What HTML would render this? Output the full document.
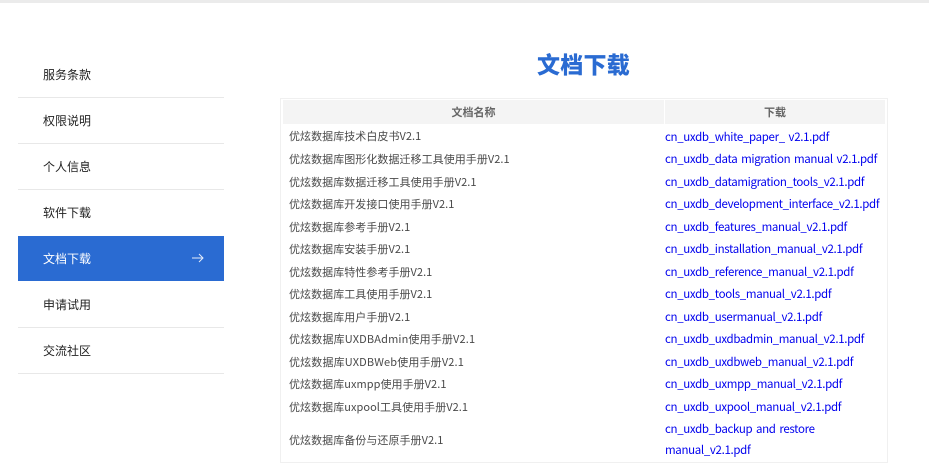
<!DOCTYPE html>
<html lang="zh-CN"><head><meta charset="utf-8"><style>
html,body{margin:0;padding:0;width:929px;height:464px;overflow:hidden;background:#fff}
body{position:relative;font-family:"Liberation Sans","Noto Sans CJK SC",sans-serif}
div{position:absolute}
.t{white-space:nowrap;line-height:20px;height:20px}
.m{left:43px;font-size:12px;color:#222;font-family:"Noto Sans CJK SC",sans-serif}
.h{left:18px;width:206px;height:1px;background:#e8e8e8}
.l{left:289px;font-size:11px;color:#4a4a4a;font-family:"Noto Sans CJK SC",sans-serif;letter-spacing:.05px}
.l.w{letter-spacing:.15px}
.r{left:665px;font-size:11.5px;color:#00e;font-family:"Noto Sans CJK SC",sans-serif;letter-spacing:-.34px;word-spacing:1.5px}
.th{font-size:11px;font-weight:700;color:#666;font-family:"Noto Sans CJK SC",sans-serif;text-align:center}
</style></head><body>
<div style="left:0;top:0;width:929px;height:3px;background:#ebebeb"></div>

<div class="t m" style="top:65px">服务条款</div>
<div class="h" style="top:97px"></div>
<div class="t m" style="top:111px">权限说明</div>
<div class="h" style="top:143px"></div>
<div class="t m" style="top:157px">个人信息</div>
<div class="h" style="top:189px"></div>
<div class="t m" style="top:203px">软件下载</div>
<div style="left:18px;top:236px;width:206px;height:45px;background:#2a6bd2"></div>
<div class="t m" style="top:249px;color:#fff">文档下载</div>
<svg style="position:absolute;left:192px;top:252px" width="12" height="12" viewBox="0 0 12 12"><path d="M0 6H11M7 2L11 6L7 10" fill="none" stroke="#e4ecfa" stroke-width="1"/></svg>
<div class="t m" style="top:295px">申请试用</div>
<div class="h" style="top:327px"></div>
<div class="t m" style="top:341px">交流社区</div>
<div class="h" style="top:373px"></div>

<div class="t" style="left:537px;top:48px;height:30px;line-height:30px;font-size:23px;letter-spacing:.25px;font-weight:900;color:#2a6bd2;font-family:'Noto Sans CJK SC',sans-serif">文档下载</div>

<div style="left:280px;top:98px;width:606px;height:363px;border:1px solid #f0f0f0"></div>
<div style="left:283px;top:100px;width:381px;height:24px;background:#f4f4f4"></div>
<div style="left:665px;top:100px;width:220px;height:24px;background:#f4f4f4"></div>
<div class="t th" style="left:283px;top:102px;width:381px">文档名称</div>
<div class="t th" style="left:665px;top:102px;width:220px">下载</div>

<div class="t l" style="top:126px">优炫数据库技术白皮书V2.1</div>
<div class="t l" style="top:149px">优炫数据库图形化数据迁移工具使用手册V2.1</div>
<div class="t l" style="top:172px">优炫数据库数据迁移工具使用手册V2.1</div>
<div class="t l" style="top:194px">优炫数据库开发接口使用手册V2.1</div>
<div class="t l" style="top:217px">优炫数据库参考手册V2.1</div>
<div class="t l" style="top:239px">优炫数据库安装手册V2.1</div>
<div class="t l" style="top:262px">优炫数据库特性参考手册V2.1</div>
<div class="t l" style="top:284px">优炫数据库工具使用手册V2.1</div>
<div class="t l" style="top:307px">优炫数据库用户手册V2.1</div>
<div class="t l w" style="top:329px">优炫数据库UXDBAdmin使用手册V2.1</div>
<div class="t l w" style="top:352px">优炫数据库UXDBWeb使用手册V2.1</div>
<div class="t l" style="top:374px">优炫数据库uxmpp使用手册V2.1</div>
<div class="t l" style="top:397px">优炫数据库uxpool工具使用手册V2.1</div>
<div class="t l" style="top:430px">优炫数据库备份与还原手册V2.1</div>

<div class="t r" style="top:127px">cn_uxdb_white_paper_ v2.1.pdf</div>
<div class="t r" style="top:149px">cn_uxdb_data migration manual v2.1.pdf</div>
<div class="t r" style="top:172px">cn_uxdb_datamigration_tools_v2.1.pdf</div>
<div class="t r" style="top:194px">cn_uxdb_development_interface_v2.1.pdf</div>
<div class="t r" style="top:217px">cn_uxdb_features_manual_v2.1.pdf</div>
<div class="t r" style="top:239px">cn_uxdb_installation_manual_v2.1.pdf</div>
<div class="t r" style="top:262px">cn_uxdb_reference_manual_v2.1.pdf</div>
<div class="t r" style="top:284px">cn_uxdb_tools_manual_v2.1.pdf</div>
<div class="t r" style="top:307px">cn_uxdb_usermanual_v2.1.pdf</div>
<div class="t r" style="top:329px">cn_uxdb_uxdbadmin_manual_v2.1.pdf</div>
<div class="t r" style="top:352px">cn_uxdb_uxdbweb_manual_v2.1.pdf</div>
<div class="t r" style="top:374px">cn_uxdb_uxmpp_manual_v2.1.pdf</div>
<div class="t r" style="top:397px">cn_uxdb_uxpool_manual_v2.1.pdf</div>
<div class="t r" style="top:419px">cn_uxdb_backup and restore</div>
<div class="t r" style="top:440px">manual_v2.1.pdf</div>
</body></html>
